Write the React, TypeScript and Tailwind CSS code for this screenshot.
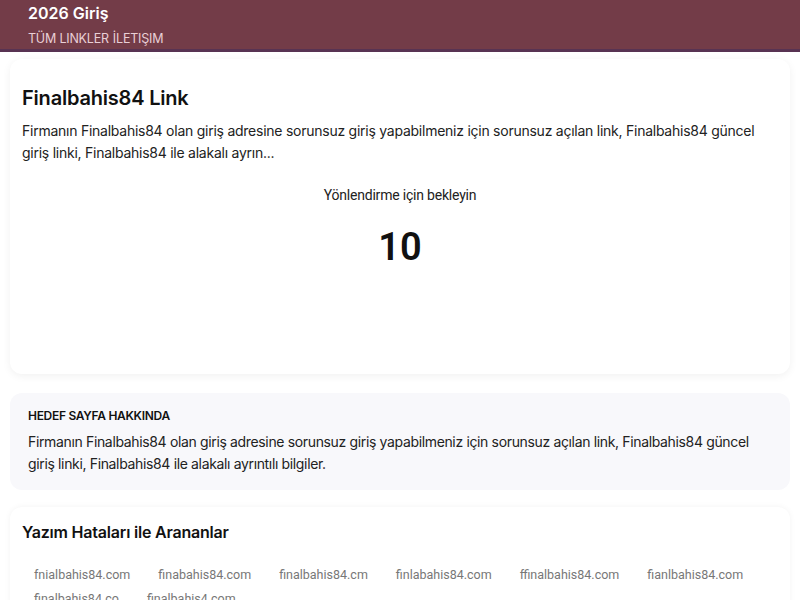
import React from 'react';

const typos = [
  'fnialbahis84.com',
  'finabahis84.com',
  'finalbahis84.cm',
  'finlabahis84.com',
  'ffinalbahis84.com',
  'fianlbahis84.com',
  'finalbahis84.co',
  'finalbahis4.com',
];

export default function App() {
  return (
    <div className="min-h-screen bg-white text-[#111] font-['Inter',sans-serif]">
      {/* Header */}
      <header className="bg-[#733c48] border-b-[3px] border-[#583352] h-[52px] px-7 pt-[3px]">
        <div className="text-white font-semibold text-[16px] leading-[20px]">2026 Giriş</div>
        <nav className="mt-[8px] text-[12.5px] leading-[16px] text-[#e9cfd6] flex gap-1 tracking-[-0.2px]">
          <a href="#">TÜM LINKLER</a>
          <a href="#">İLETIŞIM</a>
        </nav>
      </header>

      <main className="px-[10px] pt-[7px] flex flex-col">
        {/* Redirect card */}
        <section className="bg-white rounded-xl shadow-[0_2px_8px_rgba(0,0,0,0.06)] px-3 pt-[25px] h-[315px]">
          <h1 className="text-[20px] leading-[28px] font-semibold tracking-[-0.2px]">Finalbahis84 Link</h1>
          <p className="mt-[8px] text-[14px] leading-[22px] text-[#222] tracking-[-0.25px]">
            Firmanın Finalbahis84 olan giriş adresine sorunsuz giriş yapabilmeniz için sorunsuz açılan link, Finalbahis84 güncel giriş linki, Finalbahis84 ile alakalı ayrın...
          </p>
          <div className="mt-[21px] flex flex-col items-center">
            <div className="text-[14px] leading-[20px] text-[#222] font-['Roboto',sans-serif] tracking-[-0.2px]">Yönlendirme için bekleyin</div>
            <div className="mt-[20px] text-[38px] leading-[44px] font-semibold font-['Roboto',sans-serif]">10</div>
          </div>
        </section>

        {/* About */}
        <section className="mt-[19px] bg-[#f8f8fb] rounded-xl px-[18px] pt-[15px] h-[97px]">
          <h2 className="text-[12px] leading-[16px] font-semibold tracking-[-0.3px]">HEDEF SAYFA HAKKINDA</h2>
          <p className="mt-[7px] text-[14px] leading-[22px] text-[#222] tracking-[-0.35px]">
            Firmanın Finalbahis84 olan giriş adresine sorunsuz giriş yapabilmeniz için sorunsuz açılan link, Finalbahis84 güncel giriş linki, Finalbahis84 ile alakalı ayrıntılı bilgiler.
          </p>
        </section>

        {/* Typos */}
        <section className="mt-[17px] bg-white rounded-xl shadow-[0_0_6px_rgba(0,0,0,0.05)] px-3 pt-[14px] pb-4">
          <h2 className="text-[16px] leading-[22px] font-semibold tracking-[-0.2px]">Yazım Hataları ile Arananlar</h2>
          <div className="mt-[22px] flex flex-wrap gap-x-[28px] gap-y-[4px] px-3 text-[12.5px] leading-[20px] text-[#777] font-['Roboto',sans-serif]">
            {typos.map((t) => (
              <a key={t} href="#">{t}</a>
            ))}
          </div>
        </section>
      </main>
    </div>
  );
}
